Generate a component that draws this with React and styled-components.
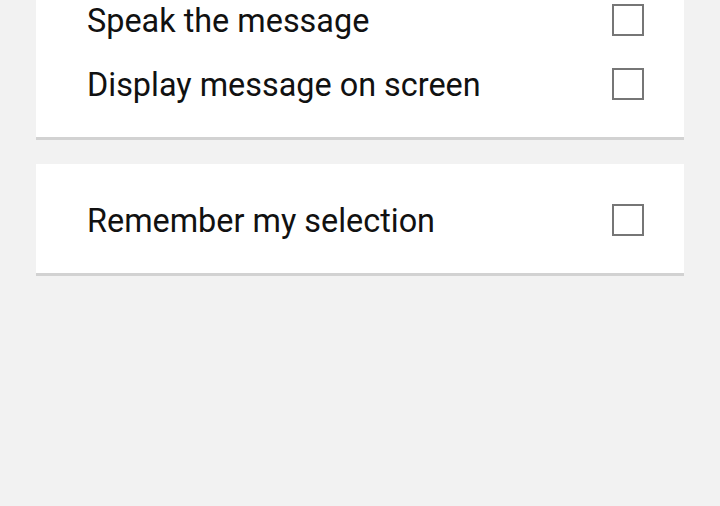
import styled, { createGlobalStyle } from 'styled-components';

const GlobalStyle = createGlobalStyle`
  html, body {
    margin: 0;
    padding: 0;
    background: #f2f2f2;
    overflow: hidden;
  }
  body {
    font-family: Roboto, "Liberation Sans", sans-serif;
  }
`

const Screen = styled.div`
  width: 720px;
  height: 506px;
  background: #f2f2f2;
  overflow: hidden;
`

const List = styled.div`
  display: flex;
  flex-direction: column;
  gap: 24px;
  padding: 0 36px;
  margin-top: -36px;
`

const Card = styled.div`
  background: #fff;
  border-bottom: 3px solid #d2d2d2;
  padding: 24px 40px 21px 51px;
`

const Row = styled.label`
  display: flex;
  align-items: center;
  justify-content: space-between;
  height: 64px;
  font-size: 32.4px;
  color: #111;
`

const Text = styled.span`
  padding-top: 2px;
`

const Box = styled.span`
  width: 32px;
  height: 32px;
  box-sizing: border-box;
  border: 2px solid #767676;
  background: #fff;
`

const sections = [
  ['Speak the message', 'Display message on screen'],
  ['Remember my selection'],
]

export default function App() {
  return (
    <Screen>
      <GlobalStyle />
      <List>
        {sections.map((rows, i) => (
          <Card key={i}>
            {rows.map(text => (
              <Row key={text}>
                <Text>{text}</Text>
                <Box />
              </Row>
            ))}
          </Card>
        ))}
      </List>
    </Screen>
  )
}
